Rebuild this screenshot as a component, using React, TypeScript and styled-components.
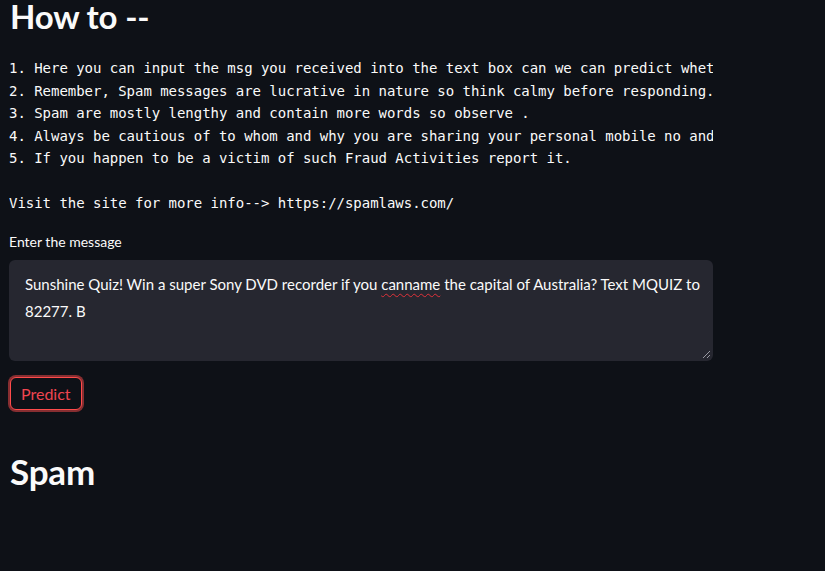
import React from "react";
import styled, { createGlobalStyle } from "styled-components";

const Global = createGlobalStyle`
  html, body { margin: 0; padding: 0; background: #0e1117; }
  body { font-family: Lato, "Noto Sans", sans-serif; color: #fafafa; }
`;

const Page = styled.main`
  width: 825px;
  height: 571px;
  overflow: hidden;
  background: #0e1117;
`;

const Column = styled.div`
  width: 704px;
  padding-left: 9px;
  display: flex;
  flex-direction: column;
`;

const Heading = styled.h2<{ $top: number; $size: number }>`
  margin: ${(p) => p.$top}px 0 0 1px;
  font-family: Lato, "Noto Sans", sans-serif;
  font-weight: 700;
  font-size: ${(p) => p.$size}px;
  line-height: 40px;
  color: #fafafa;
  letter-spacing: -0.2px;
`;

const Code = styled.pre`
  margin: 21px 0 0 0;
  font-family: "DejaVu Sans Mono", "Liberation Mono", monospace;
  font-size: 14px;
  letter-spacing: -0.03px;
  line-height: 22.5px;
  color: #fafafa;
  white-space: pre;
  overflow: hidden;
`;

const Label = styled.label`
  margin-top: 17px;
  font-size: 14px;
  line-height: 20px;
  color: #fafafa;
`;

const Field = styled.div`
  position: relative;
  margin-top: 8px;
  height: 101px;
  box-sizing: border-box;
  background: #262730;
  border-radius: 6px;
  padding: 11px 6px 11px 16px;
  font-size: 15px;
  line-height: 27px;
  color: #fafafa;
`;

const Misspelled = styled.span`
  text-decoration: underline wavy #e0323a;
  text-decoration-thickness: 1px;
  text-underline-offset: 3px;
`;

const Grip = styled.svg`
  position: absolute;
  right: 2px;
  bottom: 2px;
`;

const PredictButton = styled.button`
  align-self: flex-start;
  margin: 16px 0 0 1px;
  height: 33px;
  padding: 0 10px;
  background: #0e1117;
  border: 1px solid #ff4b4b;
  border-radius: 6px;
  box-shadow: 0 0 0 2px rgba(255, 75, 75, 0.5);
  color: #f04550;
  font-family: Lato, "Noto Sans", sans-serif;
  font-size: 16px;
`;

const lines = `1. Here you can input the msg you received into the text box can we can predict whether it is spam or not.
2. Remember, Spam messages are lucrative in nature so think calmy before responding.
3. Spam are mostly lengthy and contain more words so observe .
4. Always be cautious of to whom and why you are sharing your personal mobile no and details.
5. If you happen to be a victim of such Fraud Activities report it.

Visit the site for more info--> https://spamlaws.com/`;

export default function App() {
  return (
    <Page>
      <Global />
      <Column>
        <Heading $top={-4} $size={33}>How to --</Heading>
        <Code>{lines}</Code>
        <Label>Enter the message</Label>
        <Field>
          Sunshine Quiz! Win a super Sony DVD recorder if you <Misspelled>canname</Misspelled> the capital of Australia? Text MQUIZ to 82277. B
          <Grip width="10" height="10" viewBox="0 0 10 10">
            <path d="M9 2 L2 9 M9 6 L6 9" stroke="#9a9aa3" strokeWidth="1" />
          </Grip>
        </Field>
        <PredictButton>Predict</PredictButton>
        <Heading $top={41} $size={35}>Spam</Heading>
      </Column>
    </Page>
  );
}
